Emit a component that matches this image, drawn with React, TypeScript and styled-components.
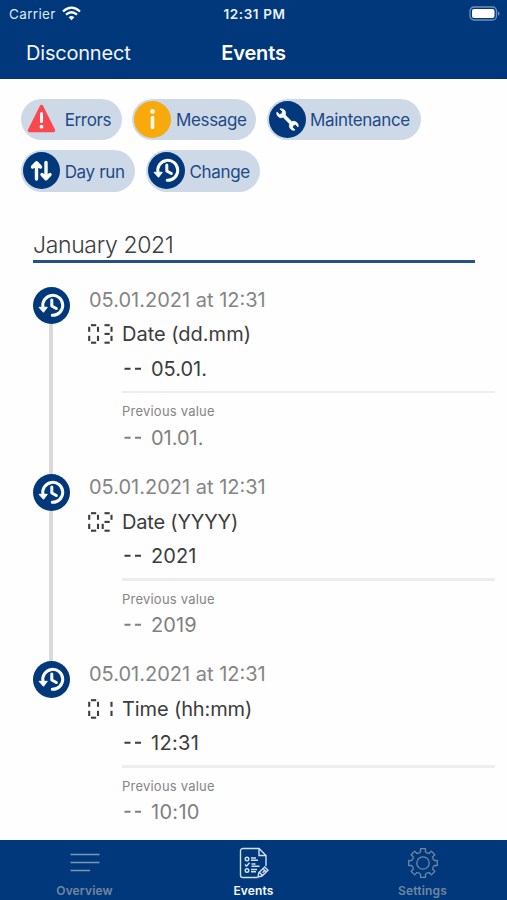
import React from "react";
import styled, { createGlobalStyle } from "styled-components";

const NAVY = "#00387b";

const Global = createGlobalStyle`
  * { box-sizing: border-box; }
  body { margin: 0; background: #fefefe; font-family: Inter, "Liberation Sans", sans-serif; }
`;

const Screen = styled.div`
  width: 507px;
  height: 900px;
  display: flex;
  flex-direction: column;
  overflow: hidden;
  background: #fefefe;
`;

const Header = styled.header`
  height: 79px;
  flex: none;
  background: ${NAVY};
  color: #fff;
`;

const StatusBar = styled.div`
  height: 27px;
  padding: 0 7px 0 9px;
  display: grid;
  grid-template-columns: 1fr auto 1fr;
  align-items: center;
`;

const Carrier = styled.div`
  display: flex;
  align-items: center;
  gap: 6px;
  font-size: 13.5px;
  letter-spacing: 0.35px;
  color: #dfe8f3;
`;

const Clock = styled.div`
  font-size: 13.5px;
  font-weight: 600;
  letter-spacing: 0.6px;
  color: #eaf1f9;
`;

const BatterySlot = styled.div`
  display: flex;
  justify-content: flex-end;
`;

const NavBar = styled.div`
  height: 51px;
  padding: 0 26px;
  display: grid;
  grid-template-columns: 1fr auto 1fr;
  align-items: center;
`;

const BackButton = styled.button`
  border: 0;
  padding: 0;
  background: none;
  color: #f2f6fb;
  text-align: left;
  font: 400 20px/24px Inter, sans-serif;
  letter-spacing: -0.2px;
`;

const NavTitle = styled.h1`
  margin: 0;
  font: 600 20px/24px Inter, sans-serif;
  letter-spacing: -0.15px;
`;

const Content = styled.main`
  flex: 1;
  min-height: 0;
  overflow: hidden;
`;

const Filters = styled.div`
  display: flex;
  flex-wrap: wrap;
  gap: 10px 10.7px;
  padding: 19.5px 20px 0 20.5px;
`;

const Chip = styled.button<{ $width: number; $gap: number }>`
  width: ${(p) => p.$width}px;
  height: 41.5px;
  padding: 0 0 0 2px;
  border: 0;
  border-radius: 21px;
  display: flex;
  align-items: center;
  gap: ${(p) => p.$gap}px;
  background: #cdd9e7;
  color: #1d4a88;
  font: 400 17px/22px Inter, sans-serif;
  letter-spacing: -0.35px;
  white-space: nowrap;
`;

const ChipLabel = styled.span`
  padding-top: 1.5px;
`;

const Month = styled.h2`
  width: 442px;
  height: 33.5px;
  margin: 37.5px 0 0 33px;
  padding-top: 2px;
  border-bottom: 3px solid #255189;
  color: #3c3c3c;
  font: 300 23px/29px Inter, sans-serif;
  letter-spacing: -0.35px;
`;

const Timeline = styled.ol`
  margin: 24.3px 0 0;
  padding: 0 12px 0 32.5px;
  list-style: none;
`;

const Entry = styled.li`
  height: 187.3px;
  display: grid;
  grid-template-columns: 37px 1fr;
  column-gap: 18px;
`;

const Rail = styled.div`
  display: flex;
  flex-direction: column;
  align-items: center;
`;

const RailLine = styled.div`
  width: 3.5px;
  flex: 1;
  background: #dadada;
`;

const Details = styled.div`
  display: grid;
  grid-template-columns: 34.5px 1fr;
  grid-template-rows: 26px 43px 26px 16.5px 26px 27px;
  align-content: start;
  align-items: center;
`;

const Stamp = styled.div`
  grid-column: 1 / -1;
  padding-left: 1.5px;
  color: #858585;
  font-size: 20px;
`;

const Title = styled.div<{ $spacing: number }>`
  color: #3c3c3c;
  font-size: 20px;
  letter-spacing: ${(p) => p.$spacing}px;
`;

const Value = styled.div<{ $old?: boolean; $spacing: number }>`
  grid-column: 2;
  display: flex;
  align-items: center;
  gap: 9px;
  padding-left: 2px;
  color: ${(p) => (p.$old ? "#808080" : "#3c3c3c")};
  font-size: 20px;
  letter-spacing: ${(p) => p.$spacing}px;
`;

const Divider = styled.div`
  grid-column: 2;
  align-self: end;
  height: 2.5px;
  margin-bottom: 5px;
  background: #ededed;
`;

const Caption = styled.div`
  grid-column: 2;
  color: #858585;
  font-size: 13px;
  letter-spacing: 0.22px;
`;

const TabBar = styled.nav`
  height: 60px;
  flex: none;
  display: grid;
  grid-template-columns: repeat(3, 1fr);
  background: ${NAVY};
`;

const Tab = styled.button<{ $active?: boolean }>`
  border: 0;
  padding: 7px 0 0;
  background: none;
  display: flex;
  flex-direction: column;
  align-items: center;
  gap: 4px;
  color: ${(p) => (p.$active ? "#f4f8fc" : "#71869f")};
  font: 600 12px/15px Inter, sans-serif;
  letter-spacing: 0.15px;
`;

function WifiIcon() {
  return (
    <svg width="19" height="15" viewBox="0 0 19 15" fill="none" stroke="#fff" strokeWidth="2.3">
      <path d="M1 5.5Q9.500-2.200 18 5.500M4 8.700Q9.500 3.900 15 8.700" />
      <path d="M6.600 11.200Q9.500 8.900 12.400 11.200L9.500 14.200Z" fill="#fff" stroke="none" />
    </svg>
  );
}

function BatteryIcon() {
  return (
    <svg width="31" height="15" viewBox="0 0 31 15">
      <rect x="1" y="1" width="26.500" height="13" rx="4" fill="none" stroke="#6d91bd" strokeWidth="1.300" />
      <rect x="3" y="3" width="22.500" height="9" rx="2" fill="#fff" />
      <path d="M29 5.300q1.500.8 1.500 2.200T29 9.700z" fill="#6d91bd" />
    </svg>
  );
}

function ErrorIcon() {
  return (
    <svg width="37" height="37" viewBox="0 0 37 37">
      <path d="M18.500 5.500 L30.500 29.500 H6.500 Z" fill="#fb474e" stroke="#fb474e" strokeWidth="3.500" strokeLinejoin="round" />
      <path d="M18.500 12.500v8" stroke="#fff" strokeWidth="3" strokeLinecap="round" />
      <circle cx="18.500" cy="25.700" r="1.900" fill="#fff" />
    </svg>
  );
}

function MessageIcon() {
  return (
    <svg width="37" height="37" viewBox="0 0 37 37">
      <circle cx="18.500" cy="18.500" r="18.500" fill="#f8a90b" />
      <circle cx="18.500" cy="10.500" r="2.400" fill="#fff7e8" />
      <path d="M18.500 16.500v10" stroke="#fff7e8" strokeWidth="3.600" strokeLinecap="round" />
    </svg>
  );
}

function WrenchIcon() {
  return (
    <svg width="37" height="37" viewBox="0 0 37 37">
      <circle cx="18.500" cy="18.500" r="18.500" fill={NAVY} />
      <g transform="rotate(-45 18.500 18.500)" fill="#fff" stroke="#fff" strokeWidth="0.600" strokeLinejoin="round">
        <path d="M16.900 13.800C13.500 12.500 12.900 7.500 16.400 5.700V9.200L18.500 10.500 20.600 9.200V5.700C24.100 7.500 23.500 12.500 20.100 13.800V23.200C23.500 24.500 24.100 29.500 20.600 31.300V27.800L18.500 26.500 16.400 27.800V31.300C12.900 29.500 13.500 24.500 16.900 23.200Z" />
      </g>
    </svg>
  );
}

function DayRunIcon() {
  return (
    <svg width="37" height="37" viewBox="0 0 37 37">
      <circle cx="18.500" cy="18.500" r="18.500" fill={NAVY} />
      <path
        d="M13.500 27V11.500M9.500 15l4-4.300 4 4.300M23 10.500V26M19 22.500l4 4.300 4-4.300"
        fill="none" stroke="#fff" strokeWidth="3.400" strokeLinecap="round" strokeLinejoin="round"
      />
    </svg>
  );
}

function HistoryIcon() {
  return (
    <svg width="37" height="37" viewBox="0 0 37 37">
      <circle cx="18.500" cy="18.500" r="18.500" fill={NAVY} />
      <g fill="none" stroke="#fff" strokeWidth="3" strokeLinecap="round" strokeLinejoin="round">
        <path d="M10 20.500A10 10 0 1 1 19.300 28.300" />
        <path d="M18.800 13V19l4.500 2.500" />
      </g>
      <path d="M6 20.300H14.300L10.500 25.300Z" fill="#fff" stroke="#fff" strokeWidth="1" strokeLinejoin="round" />
    </svg>
  );
}

const SEGMENTS: Record<string, string> = {
  a: "M3 1.200H8.200",
  b: "M10 2.800V7.800",
  c: "M10 11.800V17",
  d: "M3 18.700H8.200",
  e: "M1.200 11.800V17",
  f: "M1.200 2.800V7.800",
  g: "M3 9.900H8.200",
};

const DIGITS: Record<string, string> = { "0": "abcdef", "1": "bc", "2": "abged", "3": "abgcd" };

function SegmentNumber({ digits }: { digits: string }) {
  return (
    <svg width="26" height="20" viewBox="0 0 26 20" role="img" aria-label={digits} stroke="#3c3c3c" strokeWidth="2.100">
      {digits.split("").map((d, i) => (
        <g key={i} transform={`translate(${i * 13.5} 0)`}>
          {DIGITS[d].split("").map((s) => <path key={s} d={SEGMENTS[s]} />)}
        </g>
      ))}
    </svg>
  );
}

function Dashes() {
  return (
    <svg width="18" height="4" viewBox="0 0 18 4" stroke="currentColor" strokeWidth="2">
      <path d="M.500 1.700H6.500M11 1.700h6" />
    </svg>
  );
}

function OverviewIcon() {
  return (
    <svg width="32" height="32" viewBox="0 0 32 32" stroke="#7d97b5" strokeWidth="1.500">
      <path d="M1.500 7.500h29M1.500 15.500h29M1.500 23.500h19.500" />
    </svg>
  );
}

function EventsIcon() {
  return (
    <svg width="32" height="32" viewBox="0 0 32 32" fill="none" stroke="#cfe0f1" strokeWidth="1.400">
      <path d="M19.500 30.500H5Q2.500 30.500 2.500 28V4Q2.500 1.500 5 1.500H21L28 8.500V19" />
      <path d="M21 1.500V8.500H28" />
      <circle cx="9" cy="12" r="1.800" />
      <path d="m7 17.500 1.500 1.700 3-3.500" />
      <circle cx="9" cy="23.500" r="1.800" />
      <path d="M13 11h5M13 13.300h7M13.500 17h4M13.500 19.300h8M13 22.500h6M13 24.800h5" />
      <path d="m20 30 .8-4.500 6-5.500 3.200 3.200-6 5.800ZM25 21.500l3.300 3.500M21.500 25.500l3 3M24.500 25.700l2-2" />
    </svg>
  );
}

function GearIcon() {
  const teeth = Array.from({ length: 8 }, (_, i) => {
    const at = (r: number, deg: number) => {
      const t = ((i * 45 + deg - 90) * Math.PI) / 180;
      return `${(16 + r * Math.cos(t)).toFixed(2)} ${(16 + r * Math.sin(t)).toFixed(2)}`;
    };
    return `${i ? "L" : "M"}${at(11.6, -12)}L${at(14.5, -10)}L${at(14.5, 10)}L${at(11.6, 12)}Q${at(10.2, 22.5)} ${at(11.6, 33)}`;
  }).join("");
  return (
    <svg width="32" height="32" viewBox="0 0 32 32" fill="none" stroke="#7187a0" strokeWidth="1.300" strokeLinejoin="round">
      <path d={`${teeth}Z`} />
      <circle cx="16" cy="16" r="6.200" />
    </svg>
  );
}

const entries = [
  { id: "03", title: "Date (dd.mm)", titleSpacing: 0, value: "05.01.", previous: "01.01.", spacing: 0 },
  { id: "02", title: "Date (YYYY)", titleSpacing: -0.2, value: "2021", previous: "2019", spacing: 0.1 },
  { id: "01", title: "Time (hh:mm)", titleSpacing: -0.12, value: "12:31", previous: "10:10", spacing: 0.3 },
];

const filters = [
  { label: "Errors", Icon: ErrorIcon, width: 101, gap: 5.2 },
  { label: "Message", Icon: MessageIcon, width: 124, gap: 4.8 },
  { label: "Maintenance", Icon: WrenchIcon, width: 154, gap: 4.2 },
  { label: "Day run", Icon: DayRunIcon, width: 114.5, gap: 5.2 },
  { label: "Change", Icon: HistoryIcon, width: 114, gap: 4.8 },
];

export default function App() {
  return (
    <Screen>
      <Global />
      <Header>
        <StatusBar>
          <Carrier>Carrier <WifiIcon /></Carrier>
          <Clock>12:31 PM</Clock>
          <BatterySlot><BatteryIcon /></BatterySlot>
        </StatusBar>
        <NavBar>
          <BackButton>Disconnect</BackButton>
          <NavTitle>Events</NavTitle>
        </NavBar>
      </Header>
      <Content>
        <Filters>
          {filters.map(({ label, Icon, width, gap }) => (
            <Chip key={label} $width={width} $gap={gap}>
              <Icon />
              <ChipLabel>{label}</ChipLabel>
            </Chip>
          ))}
        </Filters>
        <Month>January 2021</Month>
        <Timeline>
          {entries.map((e, i) => (
            <Entry key={e.id}>
              <Rail>
                <HistoryIcon />
                {i < entries.length - 1 && <RailLine />}
              </Rail>
              <Details>
                <Stamp>05.01.2021 at 12:31</Stamp>
                <SegmentNumber digits={e.id} />
                <Title $spacing={e.titleSpacing}>{e.title}</Title>
                <Value $spacing={e.spacing}><Dashes />{e.value}</Value>
                <Divider />
                <Caption>Previous value</Caption>
                <Value $old $spacing={e.spacing}><Dashes />{e.previous}</Value>
              </Details>
            </Entry>
          ))}
        </Timeline>
      </Content>
      <TabBar>
        <Tab><OverviewIcon />Overview</Tab>
        <Tab $active><EventsIcon />Events</Tab>
        <Tab><GearIcon />Settings</Tab>
      </TabBar>
    </Screen>
  );
}
